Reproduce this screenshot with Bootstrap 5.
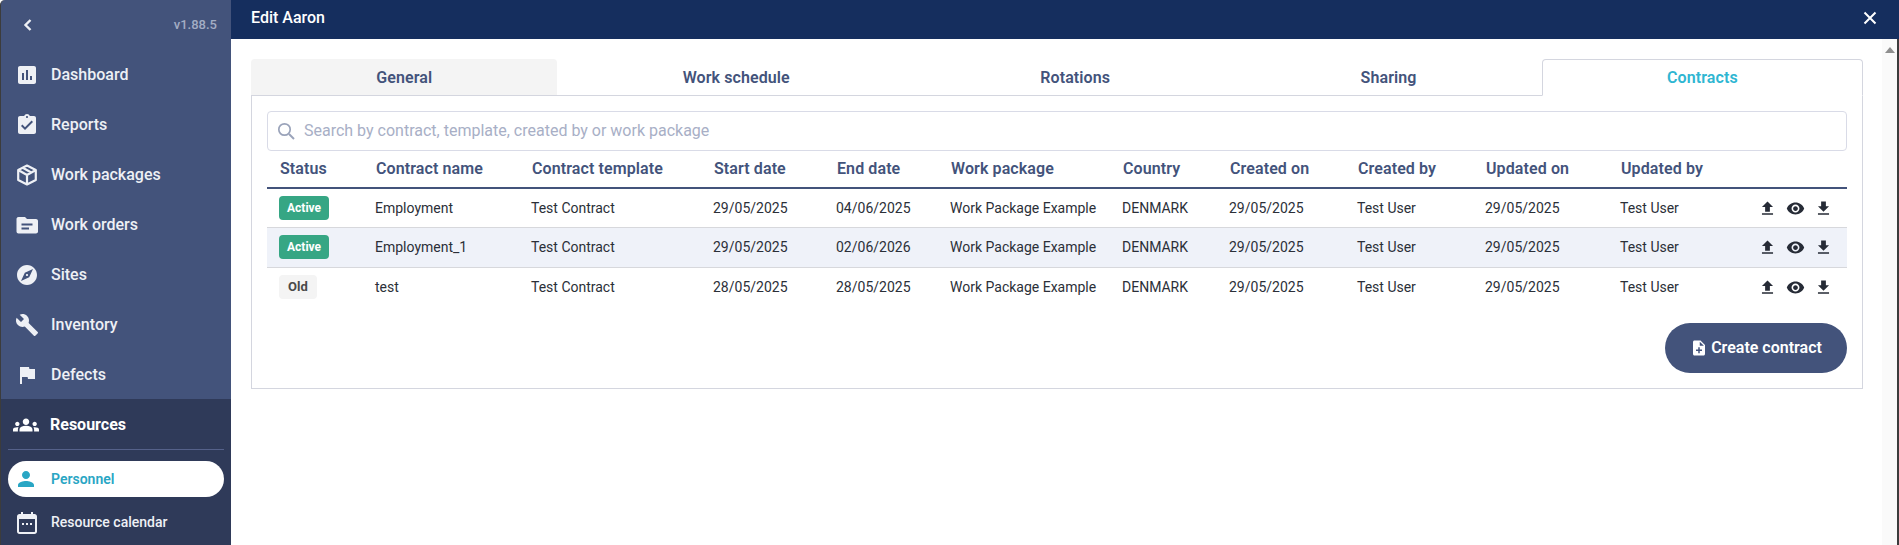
<!DOCTYPE html>
<html lang="en">
<head>
<meta charset="utf-8">
<title>Edit Aaron</title>
<link href="https://cdn.jsdelivr.net/npm/bootstrap@5.3.0/dist/css/bootstrap.min.css" rel="stylesheet">
<style>
html,body{height:100%;overflow:hidden;background:#fff;}
body{font-family:Roboto,"Liberation Sans",sans-serif;color:#2b2f38;}
.app-shell{width:1899px;height:545px;overflow:hidden;background:#fff;}
.side{width:231px;flex:none;height:545px;background:#43537b;color:#eef0f5;border-left:1px solid #3c3c3c;border-top-left-radius:5px;overflow:hidden;}
.side-top{height:49px;padding:0 14px 0 20px;}
.side-ver{color:#a3adc4;font-size:13px;font-weight:500;}
.side-item{height:50px;padding:2px 0 0 14px;gap:12px;font-size:16px;font-weight:500;color:#eef0f5;text-decoration:none;}
.side-item svg{width:24px;height:24px;flex:none;fill:currentColor;}
.side-sub{background:#2f3a59;height:146px;}
.side-res{height:50px;padding:2px 0 0 12px;gap:11px;font-weight:700;font-size:16px;color:#fff;}
.side-res svg{width:26px;height:26px;fill:currentColor;flex:none;}
.side-rule{height:1px;margin:0 7px 11px;background:#55618a;}
.side-pill{height:36px;margin:0 7px;padding-left:6px;gap:13px;background:#fff;border-radius:18px;color:#29a6c4;font-size:14px;font-weight:600;}
.side-pill svg{width:24px;height:24px;fill:currentColor;flex:none;}
.side-cal{height:50px;padding:1px 0 0 14px;gap:12px;font-size:14px;font-weight:500;color:#eef0f5;}
.side-cal svg{width:24px;height:24px;flex:none;}
.main-col{min-width:0;}
.top-bar{height:39px;background:#152e5e;color:#fff;font-size:16px;font-weight:500;padding:0 22px 3px 20px;}
.top-bar svg{width:14px;height:14px;}
.main-body{height:506px;}
.content-wrap{padding:20px 19px 0 20px;width:1651px;}
.scroll-track{width:15px;background:#fafafa;padding-top:8px;}
.scroll-tip{width:0;height:0;margin:0 auto;border-left:5px solid transparent;border-right:5px solid transparent;border-bottom:6px solid #8f8f8f;}
.edge-line{width:2px;background:#3c3c3c;}
.tab-strip{border-bottom:1px solid #d4d6df;height:37px;}
.tab-strip .nav-link{height:37px;border:1px solid transparent;border-radius:4px 4px 0 0;font-size:16px;font-weight:600;letter-spacing:.1px;color:#43537b;padding:0;line-height:35px;background:none;}
.tab-strip .nav-item:first-child .nav-link{background:#f4f4f4;border-color:#f4f4f4 #f4f4f4 transparent;height:36px;}
.tab-strip .nav-link.active{color:#2fb6d2;background:#fff;border-color:#d4d6df #d4d6df #fff;}
.tab-body{border:1px solid #d4d6df;border-top:0;height:293px;padding:15px 15px 0;}
.search-box{height:40px;border:1px solid #d9dbe7;border-radius:4px;padding-left:9px;gap:9px;}
.search-box svg{width:18px;height:18px;flex:none;}
.search-box input{border:0;outline:0;padding:0;width:100%;font-family:inherit;font-size:16px;color:#2b2f38;}
.search-box input::placeholder{color:#a8afc6;opacity:1;}
.data-table{table-layout:fixed;width:1580px;margin:0;font-size:14px;--bs-table-bg:transparent;--bs-table-color:#2b2f38;}
.data-table th{font-size:16px;font-weight:600;letter-spacing:.1px;color:#43537b;height:37px;padding:0 0 0 13px;border-bottom:2px solid #43537b;vertical-align:middle;white-space:nowrap;}
.data-table td{height:39.5px;padding:0 0 0 12px;border-bottom:1px solid #d7d8dc;vertical-align:middle;white-space:nowrap;}
.data-table tbody tr:last-child td{border-bottom:0;}
.data-table tr.stripe td{background:#eff2f9;}
.w-a{width:96px}.w-b{width:156px}.w-c{width:182px}.w-d{width:123px}.w-e{width:114px}.w-f{width:172px}.w-g{width:107px}.w-h{width:128px}.w-i{width:128px}.w-j{width:135px}.w-k{width:134px}.w-l{width:105px}
.state-tag{display:inline-block;height:24px;line-height:24px;padding:0 8px;border-radius:4px;font-size:12px;font-weight:700;}
.state-on{background:#36a684;color:#fff;}
.state-old{background:#f4f4f4;color:#4a4a4a;padding:0 9px;font-size:13px;}
.row-tools{gap:9px;margin-left:4px;}
.row-tools svg{width:19px;height:19px;fill:#262b36;flex:none;}
.make-btn{height:50px;width:182px;border-radius:25px;background:#43537b;color:#fff;border:0;font-size:16px;font-weight:600;gap:3px;margin-top:16px;padding:0;}
.make-btn:hover{background:#43537b;color:#fff;}
.make-btn svg{width:18px;height:18px;fill:#fff;}
</style>
</head>
<body>
<div class="app-shell d-flex">
  <nav class="side d-flex flex-column">
    <div class="side-top d-flex align-items-center justify-content-between">
      <svg width="14" height="14" viewBox="0 0 14 14" aria-hidden="true"><path d="M9.500 2 4.500 7l5 5" fill="none" stroke="#eef0f5" stroke-width="2.400"/></svg>
      <span class="side-ver">v1.88.5</span>
    </div>
    <a class="side-item d-flex align-items-center" href="#"><svg viewBox="0 0 24 24"><path d="M19 3H5c-1.100 0-2 .9-2 2v14c0 1.100.9 2 2 2h14c1.100 0 2-.9 2-2V5c0-1.100-.9-2-2-2zM9 17H7v-7h2v7zm4 0h-2V7h2v10zm4 0h-2v-4h2v4z"/></svg>Dashboard</a>
    <a class="side-item d-flex align-items-center" href="#"><svg viewBox="0 0 24 24"><path d="M19 3h-4.180C14.400 1.840 13.300 1 12 1c-1.300 0-2.400.84-2.820 2H5c-1.100 0-2 .9-2 2v14c0 1.100.9 2 2 2h14c1.100 0 2-.9 2-2V5c0-1.100-.9-2-2-2zm-7 0c.55 0 1 .45 1 1s-.45 1-1 1-1-.45-1-1 .45-1 1-1zm-2 14l-4-4 1.410-1.410L10 14.170l6.590-6.590L18 9l-8 8z"/></svg>Reports</a>
    <a class="side-item d-flex align-items-center" href="#"><svg viewBox="0 0 24 24"><path d="M12 2.500 20.800 7v10L12 21.500 3.200 17V7zM3.200 7 12 12l8.800-5M12 12v9.500M7.800 4.700l8.400 4.800" fill="none" stroke="currentColor" stroke-width="2.200" stroke-linejoin="round"/></svg>Work packages</a>
    <a class="side-item d-flex align-items-center" href="#"><svg viewBox="0 0 24 24"><path fill-rule="evenodd" d="M21 6h-9L10 4H3.500C2.400 4 1.500 4.900 1.500 6v12.500c0 1.100.9 2 2 2H21c1.100 0 2-.9 2-2V8c0-1.100-.9-2-2-2zM6.500 10.500h11v2h-11zm0 4h7.500v2H6.500z"/></svg>Work orders</a>
    <a class="side-item d-flex align-items-center" href="#"><svg viewBox="0 0 24 24"><path d="M12 10.900c-.61 0-1.100.49-1.100 1.100s.49 1.100 1.100 1.100c.61 0 1.100-.49 1.100-1.100s-.49-1.100-1.100-1.100zM12 2C6.480 2 2 6.480 2 12s4.480 10 10 10 10-4.480 10-10S17.520 2 12 2zm2.190 12.190L6 18l3.810-8.190L18 6l-3.810 8.190z"/></svg>Sites</a>
    <a class="side-item d-flex align-items-center" href="#"><svg viewBox="0 0 24 24"><path d="M22.700 19l-9.100-9.100c.9-2.300.4-5-1.500-6.900-2-2-5-2.400-7.400-1.300L9 6 6 9 1.600 4.700C.4 7.100.9 10.100 2.900 12.100c1.900 1.900 4.600 2.400 6.900 1.500l9.100 9.100c.4.4 1 .4 1.400 0l2.300-2.300c.5-.4.5-1.100.1-1.400z"/></svg>Inventory</a>
    <a class="side-item d-flex align-items-center" href="#"><svg viewBox="0 0 24 24"><path d="M14.400 6 14 4H5v17h2v-7h5.600l.4 2h7V6z"/></svg>Defects</a>
    <div class="side-sub">
      <div class="side-res d-flex align-items-center"><svg viewBox="0 0 24 24"><path d="M12 12.750c1.630 0 3.070.39 4.240.9 1.080.48 1.760 1.560 1.760 2.730V18H6v-1.610c0-1.180.68-2.260 1.760-2.730 1.170-.52 2.610-.91 4.240-.91zM4 13c1.100 0 2-.9 2-2s-.9-2-2-2-2 .9-2 2 .9 2 2 2zm1.130 1.100c-.37-.06-.74-.1-1.130-.1-.99 0-1.930.21-2.780.58C.48 14.900 0 15.620 0 16.430V18h4.500v-1.610c0-.83.23-1.610.63-2.290zM20 13c1.100 0 2-.9 2-2s-.9-2-2-2-2 .9-2 2 .9 2 2 2zm4 3.430c0-.81-.48-1.530-1.220-1.850-.85-.37-1.790-.58-2.780-.58-.39 0-.76.04-1.130.1.4.68.63 1.460.63 2.290V18H24v-1.570zM12 6c1.660 0 3 1.340 3 3s-1.340 3-3 3-3-1.340-3-3 1.340-3 3-3z"/></svg>Resources</div>
      <div class="side-rule"></div>
      <div class="side-pill d-flex align-items-center"><svg viewBox="0 0 24 24"><path d="M12 12c2.210 0 4-1.790 4-4s-1.790-4-4-4-4 1.790-4 4 1.790 4 4 4zm0 2c-2.670 0-8 1.340-8 4v2h16v-2c0-2.660-5.330-4-8-4z"/></svg>Personnel</div>
      <div class="side-cal d-flex align-items-center"><svg viewBox="0 0 24 24"><path fill="#eef0f5" fill-rule="evenodd" d="M6 1h2v2h8V1h2v2h1.500C20.900 3 22 4.100 22 5.500v15c0 1.400-1.100 2.500-2.500 2.500h-15C3.100 23 2 21.900 2 20.500v-15C2 4.100 3.100 3 4.500 3H6zM4 8v12.500c0 .3.2.5.5.5h15c.3 0 .5-.2.5-.5V8zm3 4h2v2H7zm4 0h2v2h-2zm4 0h2v2h-2z"/></svg>Resource calendar</div>
    </div>
  </nav>
  <div class="main-col flex-grow-1 d-flex flex-column">
    <header class="top-bar d-flex align-items-center justify-content-between">
      <span>Edit Aaron</span>
      <svg viewBox="0 0 14 14" aria-hidden="true"><path d="M1.500 1.500l11 11m0-11-11 11" stroke="#fff" stroke-width="2" fill="none"/></svg>
    </header>
    <div class="main-body d-flex">
      <div class="content-wrap">
        <ul class="nav nav-fill tab-strip">
          <li class="nav-item"><a class="nav-link" href="#">General</a></li>
          <li class="nav-item"><a class="nav-link" href="#">Work schedule</a></li>
          <li class="nav-item"><a class="nav-link" href="#">Rotations</a></li>
          <li class="nav-item"><a class="nav-link" href="#">Sharing</a></li>
          <li class="nav-item"><a class="nav-link active" href="#">Contracts</a></li>
        </ul>
        <div class="tab-body d-flex flex-column">
          <label class="search-box d-flex align-items-center flex-none">
            <svg viewBox="0 0 18 18" aria-hidden="true"><circle cx="7.500" cy="7.500" r="5.700" fill="none" stroke="#9aa3ba" stroke-width="1.700"/><path d="m12 12 5 5" stroke="#9aa3ba" stroke-width="2"/></svg>
            <input type="text" placeholder="Search by contract, template, created by or work package">
          </label>
          <table class="table data-table">
            <colgroup><col class="w-a"><col class="w-b"><col class="w-c"><col class="w-d"><col class="w-e"><col class="w-f"><col class="w-g"><col class="w-h"><col class="w-i"><col class="w-j"><col class="w-k"><col class="w-l"></colgroup>
            <thead><tr><th>Status</th><th>Contract name</th><th>Contract template</th><th>Start date</th><th>End date</th><th>Work package</th><th>Country</th><th>Created on</th><th>Created by</th><th>Updated on</th><th>Updated by</th><th></th></tr></thead>
            <tbody>
              <tr><td><span class="state-tag state-on">Active</span></td><td>Employment</td><td>Test Contract</td><td>29/05/2025</td><td>04/06/2025</td><td>Work Package Example</td><td>DENMARK</td><td>29/05/2025</td><td>Test User</td><td>29/05/2025</td><td>Test User</td><td><div class="row-tools d-flex align-items-center"><svg viewBox="0 0 24 24"><path d="M9 16h6v-6h4l-7-7-7 7h4zm-4 2h14v2H5z"/></svg><svg viewBox="0 0 24 24"><path d="M12 4.500C7 4.500 2.730 7.610 1 12c1.730 4.390 6 7.500 11 7.500s9.270-3.110 11-7.500c-1.730-4.390-6-7.500-11-7.500zM12 17c-2.760 0-5-2.240-5-5s2.240-5 5-5 5 2.240 5 5-2.240 5-5 5zm0-8c-1.660 0-3 1.340-3 3s1.340 3 3 3 3-1.340 3-3-1.340-3-3-3z"/></svg><svg viewBox="0 0 24 24"><path d="M19 9h-4V3H9v6H5l7 7 7-7zM5 18v2h14v-2H5z"/></svg></div></td></tr>
              <tr class="stripe"><td><span class="state-tag state-on">Active</span></td><td>Employment_1</td><td>Test Contract</td><td>29/05/2025</td><td>02/06/2026</td><td>Work Package Example</td><td>DENMARK</td><td>29/05/2025</td><td>Test User</td><td>29/05/2025</td><td>Test User</td><td><div class="row-tools d-flex align-items-center"><svg viewBox="0 0 24 24"><path d="M9 16h6v-6h4l-7-7-7 7h4zm-4 2h14v2H5z"/></svg><svg viewBox="0 0 24 24"><path d="M12 4.500C7 4.500 2.730 7.610 1 12c1.730 4.390 6 7.500 11 7.500s9.270-3.110 11-7.500c-1.730-4.390-6-7.500-11-7.500zM12 17c-2.760 0-5-2.240-5-5s2.240-5 5-5 5 2.240 5 5-2.240 5-5 5zm0-8c-1.660 0-3 1.340-3 3s1.340 3 3 3 3-1.340 3-3-1.340-3-3-3z"/></svg><svg viewBox="0 0 24 24"><path d="M19 9h-4V3H9v6H5l7 7 7-7zM5 18v2h14v-2H5z"/></svg></div></td></tr>
              <tr><td><span class="state-tag state-old">Old</span></td><td>test</td><td>Test Contract</td><td>28/05/2025</td><td>28/05/2025</td><td>Work Package Example</td><td>DENMARK</td><td>29/05/2025</td><td>Test User</td><td>29/05/2025</td><td>Test User</td><td><div class="row-tools d-flex align-items-center"><svg viewBox="0 0 24 24"><path d="M9 16h6v-6h4l-7-7-7 7h4zm-4 2h14v2H5z"/></svg><svg viewBox="0 0 24 24"><path d="M12 4.500C7 4.500 2.730 7.610 1 12c1.730 4.390 6 7.500 11 7.500s9.270-3.110 11-7.500c-1.730-4.390-6-7.500-11-7.500zM12 17c-2.760 0-5-2.240-5-5s2.240-5 5-5 5 2.240 5 5-2.240 5-5 5zm0-8c-1.660 0-3 1.340-3 3s1.340 3 3 3 3-1.340 3-3-1.340-3-3-3z"/></svg><svg viewBox="0 0 24 24"><path d="M19 9h-4V3H9v6H5l7 7 7-7zM5 18v2h14v-2H5z"/></svg></div></td></tr>
            </tbody>
          </table>
          <div class="d-flex justify-content-end">
            <button type="button" class="btn make-btn d-flex align-items-center justify-content-center"><svg viewBox="0 0 24 24"><path d="M14 2H6c-1.100 0-1.990.9-1.990 2L4 20c0 1.100.89 2 1.990 2H18c1.100 0 2-.9 2-2V8l-6-6zm2 14h-3v3h-2v-3H8v-2h3v-3h2v3h3v2zm-3-7V3.500L18.500 9H13z"/></svg>Create contract</button>
          </div>
        </div>
      </div>
      <div class="scroll-track"><div class="scroll-tip"></div></div>
      <div class="edge-line"></div>
    </div>
  </div>
</div>
<script src="https://cdn.jsdelivr.net/npm/bootstrap@5.3.0/dist/js/bootstrap.bundle.min.js"></script>
</body>
</html>
